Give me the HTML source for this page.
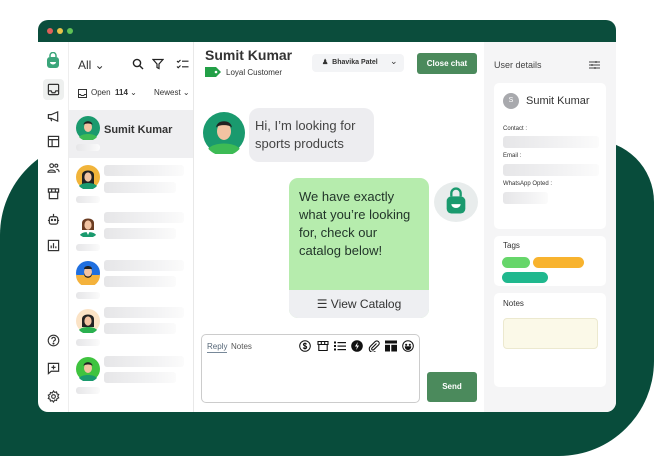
<!DOCTYPE html><html><head><style>
*{margin:0;padding:0;box-sizing:border-box}
body{width:654px;height:460px;background:#fff;position:relative;overflow:hidden;font-family:"Liberation Sans",Arial,sans-serif;color:#333}
.blob{position:absolute;left:0;top:140px;width:654px;height:316px;background:#084c3b;border-radius:95px 62px 95px 0}
.win{position:absolute;left:38px;top:20px;width:578px;height:392px;background:#fff;border-radius:10px;overflow:hidden}
.tb{height:22px;background:#0b4d3c;position:relative}
.dot{position:absolute;top:8px;width:6px;height:6px;border-radius:50%}
.abs{position:absolute}
.sk{position:absolute;background:linear-gradient(90deg,#e6e6e8,#f4f4f5 70%,#fbfbfb);border-radius:3px}
.ico{position:absolute;left:9px;width:13px;height:13px}
.ti{position:absolute;top:320px;width:12px;height:12px}
</style></head><body>
<div class="blob"></div>
<div class="win">
<div class="tb"><div class="dot" style="left:9px;background:#e0605a"></div><div class="dot" style="left:19px;background:#e8c34a"></div><div class="dot" style="left:29px;background:#5fc256"></div></div>
<!-- sidebar -->
<div class="abs" style="left:30px;top:22px;width:1px;height:370px;background:#eee"></div>
<svg class="abs" style="left:8px;top:32px" width="14" height="16" viewBox="0 0 14 16"><path d="M4 5V3.5a3 3 0 0 1 6 0V5" stroke="#3aa57a" stroke-width="1.5" fill="none"/><rect x="1" y="5" width="12" height="11" rx="3" fill="#3aa57a"/><path d="M4 10a3 2.5 0 0 0 6 0z" fill="#fff"/></svg>
<div class="abs" style="left:5px;top:59px;width:21px;height:21px;background:#eef0ef;border-radius:4px"></div>
<svg class="ico" style="top:63px" viewBox="0 0 14 14" fill="none" stroke="#333" stroke-width="1.3"><rect x="1.5" y="1.5" width="11" height="11" rx="1"/><path d="M1.5 8.5h3l1 2h3l1-2h3"/></svg>
<svg class="ico" style="top:90px" viewBox="0 0 14 14" fill="none" stroke="#333" stroke-width="1.3"><path d="M1.5 5h3l7-3v10l-7-3h-3z M4 9l1 3"/></svg>
<svg class="ico" style="top:115px" viewBox="0 0 14 14" fill="none" stroke="#333" stroke-width="1.3"><rect x="1.5" y="1.5" width="11" height="11"/><path d="M1.5 5h11M5.5 5v7.5"/></svg>
<svg class="ico" style="top:141px" viewBox="0 0 14 14" fill="none" stroke="#333" stroke-width="1.2"><circle cx="5" cy="5" r="2"/><circle cx="10" cy="5" r="1.6"/><path d="M1 12c0-3 8-3 8 0zM10 9c2 0 3 1 3 3"/></svg>
<svg class="ico" style="top:167px" viewBox="0 0 14 14" fill="none" stroke="#333" stroke-width="1.3"><path d="M1.5 2h11v3.5h-11z M2.5 5.5v7h9v-7 M5 2v3.5M9 2v3.5"/></svg>
<svg class="ico" style="top:193px" viewBox="0 0 14 14" fill="none" stroke="#333" stroke-width="1.3"><rect x="2.5" y="4" width="9" height="8" rx="2"/><path d="M7 1v3M1 8h1.5M11.5 8H13"/><circle cx="5.3" cy="7.5" r=".6" fill="#333"/><circle cx="8.7" cy="7.5" r=".6" fill="#333"/></svg>
<svg class="ico" style="top:219px" viewBox="0 0 14 14" fill="none" stroke="#333" stroke-width="1.3"><rect x="1.5" y="1.5" width="11" height="11"/><path d="M4.5 10V7M7 10V4.5M9.5 10V8"/></svg>
<svg class="ico" style="top:314px" viewBox="0 0 14 14" fill="none" stroke="#333" stroke-width="1.2"><circle cx="7" cy="7" r="5.7"/><path d="M5.2 5.5a1.9 1.9 0 1 1 2.5 1.8c-.5.2-.7.6-.7 1.2"/><circle cx="7" cy="10.3" r=".5" fill="#333"/></svg>
<svg class="ico" style="top:342px" viewBox="0 0 14 14" fill="none" stroke="#333" stroke-width="1.3"><path d="M1.5 1.5h11v8.5h-8l-3 2.5z M7 3.5v4.5M4.8 5.8h4.4"/></svg>
<svg class="ico" style="top:370px" viewBox="0 0 14 14" fill="none" stroke="#333" stroke-width="1.2"><circle cx="7" cy="7" r="2"/><path d="M7 1l1.3 1.6 2-.5.4 2 1.9.8-1 1.8 1 1.8-1.9.8-.4 2-2-.5L7 13l-1.3-1.6-2 .5-.4-2-1.9-.8 1-1.8-1-1.8 1.9-.8.4-2 2 .5z"/></svg>
<!-- list -->
<div class="abs" style="left:155px;top:22px;width:1px;height:370px;background:#e8e8e8"></div>
<div class="abs" style="left:40px;top:38px;font-size:12px">All ⌄</div>
<svg class="abs" style="left:94px;top:38px" width="12" height="12" viewBox="0 0 12 12" fill="none" stroke="#222" stroke-width="1.4"><circle cx="5" cy="5" r="3.6"/><path d="M7.7 7.7L11 11"/></svg>
<svg class="abs" style="left:114px;top:38px" width="12" height="12" viewBox="0 0 12 12" fill="none" stroke="#222" stroke-width="1.2"><path d="M1 1.5h10L7 6v4.5L5 9.5V6z"/></svg>
<svg class="abs" style="left:138px;top:38px" width="13" height="12" viewBox="0 0 13 12" fill="none" stroke="#222" stroke-width="1.1"><path d="M1 3l1.2 1.2L4.5 2M1 8.5l1.2 1.2L4.5 7.5M6 3.2h6.5M6 8.8h6.5"/></svg>
<svg class="abs" style="left:40px;top:69px" width="9" height="9" viewBox="0 0 9 9" fill="none" stroke="#333" stroke-width="1"><rect x=".5" y=".5" width="8" height="8"/><path d="M.5 5.5h2l.7 1h2.6l.7-1h2"/></svg>
<div class="abs" style="left:53px;top:68px;font-size:8px;color:#333">Open&nbsp; <b>114</b> ⌄</div>
<div class="abs" style="left:116px;top:68px;font-size:8px;color:#333">Newest ⌄</div>
<div class="abs" style="left:31px;top:90px;width:124px;height:48px;background:#efeff1"></div>
<div class="abs" style="left:66px;top:104px;font-size:11px;color:#333;font-weight:bold">Sumit Kumar</div>
<div class="sk" style="left:38px;top:124px;width:24px;height:7px"></div>

<!-- avatars -->
<svg class="abs" style="left:38px;top:96px" width="24" height="24" viewBox="0 0 24 24"><circle cx="12" cy="12" r="12" fill="#1a9a6e"/><path d="M3 21c3-4 15-4 18 0a12 12 0 0 1-18 0z" fill="#3dbb55"/><ellipse cx="12" cy="11" rx="4" ry="5" fill="#f2c3a2"/><path d="M7.5 9c0-5 9-5 9 0-1-2-8-2-9 0z" fill="#222"/></svg>
<svg class="abs" style="left:38px;top:145px" width="24" height="24" viewBox="0 0 24 24"><circle cx="12" cy="12" r="12" fill="#f1b43a"/><path d="M6 20V10c0-6 12-6 12 0v10z" fill="#222"/><path d="M3 21c3-4 15-4 18 0a12 12 0 0 1-18 0z" fill="#1a9a6e"/><ellipse cx="12" cy="12" rx="3.6" ry="4.6" fill="#f2c3a2"/></svg>
<svg class="abs" style="left:38px;top:193px" width="24" height="24" viewBox="0 0 24 24"><circle cx="12" cy="12" r="12" fill="#fff"/><path d="M6 17V10c0-6 12-6 12 0v7z" fill="#6b3c22"/><path d="M4 22c2-4 14-4 16 0a12 12 0 0 1-16 0z" fill="#1a9a6e"/><path d="M10 18l2 4 2-4z" fill="#fff"/><ellipse cx="12" cy="12" rx="3.6" ry="4.6" fill="#f2c3a2"/></svg>
<svg class="abs" style="left:38px;top:241px" width="24" height="24" viewBox="0 0 24 24"><circle cx="12" cy="12" r="12" fill="#1f6fe0"/><path d="M0 14h24a12 12 0 0 1-24 0z" fill="#f4b23c"/><ellipse cx="12" cy="11" rx="4" ry="5" fill="#f2c3a2"/><path d="M8 11c0 6 8 6 8 0v2c0 5-8 5-8 0z" fill="#222"/><path d="M8 8c0-4 8-4 8 0z" fill="#222"/></svg>
<svg class="abs" style="left:38px;top:289px" width="24" height="24" viewBox="0 0 24 24"><circle cx="12" cy="12" r="12" fill="#fbe3c6"/><path d="M6 18V10c0-6 12-6 12 0v8z" fill="#222"/><path d="M3 21c3-4 15-4 18 0a12 12 0 0 1-18 0z" fill="#2ab04f"/><ellipse cx="12" cy="12" rx="3.6" ry="4.6" fill="#f2c3a2"/></svg>
<svg class="abs" style="left:38px;top:337px" width="24" height="24" viewBox="0 0 24 24"><circle cx="12" cy="12" r="12" fill="#3fc33f"/><path d="M3 21c3-4 15-4 18 0a12 12 0 0 1-18 0z" fill="#1a9a6e"/><ellipse cx="12" cy="11" rx="4" ry="5" fill="#f2c3a2"/><path d="M7.5 9c0-5 9-5 9 0-1-2-8-2-9 0z" fill="#222"/></svg>
<div class="sk" style="left:66px;top:145px;width:80px;height:11px"></div><div class="sk" style="left:66px;top:162px;width:72px;height:11px"></div><div class="sk" style="left:38px;top:176px;width:24px;height:7px"></div>
<div class="sk" style="left:66px;top:192px;width:80px;height:11px"></div><div class="sk" style="left:66px;top:208px;width:72px;height:11px"></div><div class="sk" style="left:38px;top:224px;width:24px;height:7px"></div>
<div class="sk" style="left:66px;top:240px;width:80px;height:11px"></div><div class="sk" style="left:66px;top:256px;width:72px;height:11px"></div><div class="sk" style="left:38px;top:272px;width:24px;height:7px"></div>
<div class="sk" style="left:66px;top:287px;width:80px;height:11px"></div><div class="sk" style="left:66px;top:303px;width:72px;height:11px"></div><div class="sk" style="left:38px;top:319px;width:24px;height:7px"></div>
<div class="sk" style="left:66px;top:336px;width:80px;height:11px"></div><div class="sk" style="left:66px;top:352px;width:72px;height:11px"></div><div class="sk" style="left:38px;top:367px;width:24px;height:7px"></div>
<!-- chat -->
<div class="abs" style="left:167px;top:27px;font-size:14px;font-weight:bold;color:#333">Sumit Kumar</div>
<svg class="abs" style="left:167px;top:47px" width="16" height="10" viewBox="0 0 16 10"><path d="M0 0h11l5 5-5 5H0z" fill="#23a047"/><circle cx="11" cy="5" r="1.3" fill="#fff"/></svg>
<div class="abs" style="left:188px;top:48px;font-size:8px;color:#333">Loyal Customer</div>
<div class="abs" style="left:274px;top:34px;width:92px;height:18px;background:#f3f4f6;border-radius:4px"></div>
<div class="abs" style="left:284px;top:38px;font-size:7px;font-weight:bold;color:#333">♟&nbsp; Bhavika Patel</div>
<div class="abs" style="left:352px;top:36px;font-size:9px">⌄</div>
<div class="abs" style="left:379px;top:33px;width:60px;height:21px;background:#4b8a5c;border-radius:3px;color:#fff;font-size:8px;font-weight:bold;text-align:center;line-height:21px">Close chat</div>
<svg class="abs" style="left:165px;top:92px" width="42" height="42" viewBox="0 0 24 24"><circle cx="12" cy="12" r="12" fill="#1a9a6e"/><path d="M3 21c3-4 15-4 18 0a12 12 0 0 1-18 0z" fill="#3dbb55"/><ellipse cx="12" cy="11" rx="4" ry="5" fill="#f2c3a2"/><path d="M7.5 9c0-5 9-5 9 0-1-2-8-2-9 0z" fill="#222"/></svg>
<div class="abs" style="left:211px;top:88px;width:125px;height:54px;background:#ededf0;border-radius:10px;padding:9px 0 0 6px;font-size:13px;line-height:18px;color:#444">Hi, I’m looking for<br>sports products</div>
<div class="abs" style="left:251px;top:158px;width:140px;height:140px;border-radius:9px;overflow:hidden;background:#b6ecad">
<div style="padding:10px 0 0 10px;font-size:13px;line-height:18px;color:#22352a">We have exactly<br>what you’re looking<br>for, check our<br>catalog below!</div>
<div class="abs" style="left:0;bottom:0;width:140px;height:28px;background:#eeeff2;text-align:center;font-size:12px;line-height:28px;color:#333">☰ View Catalog</div></div>
<div class="abs" style="left:396px;top:162px;width:44px;height:40px;border-radius:50%;background:#e8ecec"></div>
<svg class="abs" style="left:407px;top:167px" width="22" height="28" viewBox="0 0 14 18"><path d="M4 6V4a3 3 0 0 1 6 0v2" stroke="#1a9a6e" stroke-width="1.5" fill="none"/><rect x="1" y="6" width="12" height="11" rx="3" fill="#1a9a6e"/><path d="M4 11a3 2.5 0 0 0 6 0z" fill="#fff"/></svg>
<div class="abs" style="left:163px;top:314px;width:219px;height:69px;border:1px solid #ccc;border-radius:5px"></div>
<div class="abs" style="left:169px;top:322px;font-size:8px;color:#567;border-bottom:1px solid #789;padding-bottom:1px">Reply</div>
<div class="abs" style="left:193px;top:322px;font-size:8px;color:#555">Notes</div>
<svg class="ti" style="left:261px" viewBox="0 0 12 12" fill="none" stroke="#111" stroke-width="1"><circle cx="6" cy="6" r="5.3"/><path d="M7.6 4.3C7.3 3.6 6.7 3.4 6 3.4c-.9 0-1.6.5-1.6 1.2 0 1.6 3.3.9 3.3 2.6 0 .8-.8 1.3-1.7 1.3-.8 0-1.5-.3-1.8-1M6 2.5v7"/></svg>
<svg class="ti" style="left:279px" viewBox="0 0 12 12" fill="none" stroke="#111" stroke-width="1.1"><path d="M1 1.5h10v3H1z M1.8 4.5v6h8.4v-6 M4.3 1.5v3M7.7 1.5v3"/></svg>
<svg class="ti" style="left:296px" viewBox="0 0 12 12" fill="#111"><rect x="0" y="1.5" width="2" height="2"/><rect x="0" y="5" width="2" height="2"/><rect x="0" y="8.5" width="2" height="2"/><rect x="3.5" y="2" width="8.5" height="1.2"/><rect x="3.5" y="5.5" width="8.5" height="1.2"/><rect x="3.5" y="9" width="8.5" height="1.2"/></svg>
<svg class="ti" style="left:313px" viewBox="0 0 12 12"><circle cx="6" cy="6" r="5.8" fill="#111"/><path d="M6.8 2L4 6.5h2L5.2 10 8 5.5H6z" fill="#fff"/></svg>
<svg class="ti" style="left:330px" viewBox="0 0 12 12" fill="none" stroke="#111" stroke-width="1.1"><path d="M8.5 3.5L4 8a1.2 1.2 0 0 0 1.7 1.7L10.5 5a2.4 2.4 0 0 0-3.4-3.4L2.3 6.4a3.5 3.5 0 0 0 5 5"/></svg>
<svg class="ti" style="left:347px" viewBox="0 0 12 12" fill="#111"><rect x="0" y="0.5" width="12" height="3"/><rect x="0" y="4.8" width="5" height="6.7"/><rect x="6.3" y="4.8" width="5.7" height="6.7"/></svg>
<svg class="ti" style="left:364px" viewBox="0 0 12 12" fill="none" stroke="#111" stroke-width="1"><circle cx="6" cy="6" r="5.3"/><circle cx="4.2" cy="4.8" r=".6" fill="#111"/><circle cx="7.8" cy="4.8" r=".6" fill="#111"/><path d="M3.3 6.8h5.4a2.7 2.7 0 0 1-5.4 0z" fill="#111"/></svg>
<div class="abs" style="left:389px;top:352px;width:50px;height:30px;background:#4b8a5c;border-radius:3px;color:#fff;font-size:8px;font-weight:bold;text-align:center;line-height:30px">Send</div>
<!-- right -->
<div class="abs" style="left:446px;top:22px;width:132px;height:370px;background:#f5f5f6"></div>
<div class="abs" style="left:456px;top:40px;font-size:9px;color:#444">User details</div>
<svg class="abs" style="left:551px;top:40px" width="11" height="10" viewBox="0 0 11 10" stroke="#444" fill="none"><path d="M0 2h11M0 5h11M0 8h11"/><path d="M7 1v2M3 4v2M6 7v2"/></svg>
<div class="abs" style="left:456px;top:63px;width:112px;height:146px;background:#fff;border-radius:5px"></div>
<div class="abs" style="left:465px;top:73px;width:16px;height:16px;border-radius:50%;background:#a8a9ad;color:#fff;font-size:7px;text-align:center;line-height:16px">S</div>
<div class="abs" style="left:488px;top:75px;font-size:11px;color:#333">Sumit Kumar</div>
<div class="abs" style="left:465px;top:106px;font-size:6px;color:#333">Contact :</div>
<div class="sk" style="left:465px;top:116px;width:96px;height:12px"></div>
<div class="abs" style="left:465px;top:133px;font-size:6px;color:#333">Email :</div>
<div class="sk" style="left:465px;top:144px;width:96px;height:12px"></div>
<div class="abs" style="left:465px;top:161px;font-size:6px;color:#333">WhatsApp Opted :</div>
<div class="sk" style="left:465px;top:172px;width:45px;height:12px"></div>
<div class="abs" style="left:456px;top:216px;width:112px;height:50px;background:#fff;border-radius:5px"></div>
<div class="abs" style="left:465px;top:221px;font-size:8px;color:#333">Tags</div>
<div class="abs" style="left:464px;top:237px;width:28px;height:11px;border-radius:6px;background:#66d66a"></div>
<div class="abs" style="left:495px;top:237px;width:51px;height:11px;border-radius:6px;background:#f8b32e"></div>
<div class="abs" style="left:464px;top:252px;width:46px;height:11px;border-radius:6px;background:#20b88e"></div>
<div class="abs" style="left:456px;top:273px;width:112px;height:94px;background:#fff;border-radius:5px"></div>
<div class="abs" style="left:465px;top:279px;font-size:8px;color:#333">Notes</div>
<div class="abs" style="left:465px;top:298px;width:95px;height:31px;background:#fbf9e8;border:1px solid #ece9cf;border-radius:4px"></div>
</div>
</body></html>
